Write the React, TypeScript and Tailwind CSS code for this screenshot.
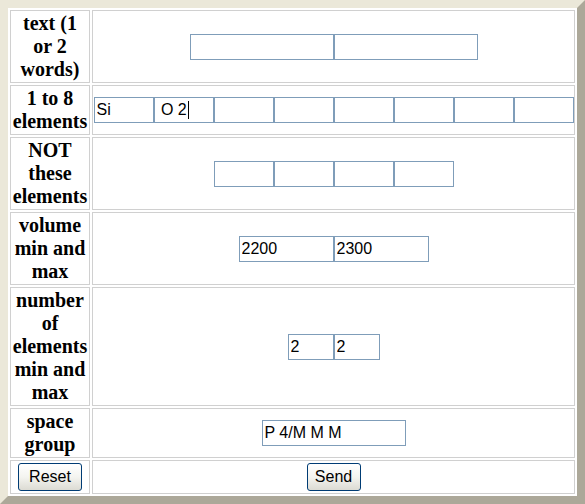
const labelCls =
  "border border-[#d0d0d0] p-[1px] text-center font-bold text-[20px] leading-[23px] text-black font-['Liberation_Serif','Times_New_Roman',serif]"
const fieldCls =
  "border border-[#d0d0d0] p-[1px] flex items-center justify-center"
const inputCls =
  "h-[26px] border border-[#7f9db9] bg-white px-[2px] text-[16px] text-black outline-none font-['Liberation_Sans',Arial,sans-serif]"
const btnCls =
  "h-[28px] rounded-[3px] border border-[#003c74] bg-gradient-to-b from-white via-[#f4f4f0] to-[#dcdbd3] text-[16px] text-black font-['Liberation_Sans',Arial,sans-serif]"

function Inputs({ count, width, values = [] }: { count: number; width: string; values?: string[] }) {
  return (
    <>
      {Array.from({ length: count }).map((_, i) => (
        <input key={i} className={`${inputCls} ${width}`} defaultValue={values[i] ?? ''} />
      ))}
    </>
  )
}

export default function App() {
  return (
    <div className="w-[585px] bg-white">
      <form
        className="grid grid-cols-[80px_483px] gap-[2px] p-[2px] bg-white border-8 border-t-[#ebe8d9] border-l-[#ebe8d9] border-r-[#aca899] border-b-[#aca899]"
        onSubmit={(e) => e.preventDefault()}
      >
        <div className={labelCls}>
          text (1<br />or 2<br />words)
        </div>
        <div className={fieldCls}>
          <Inputs count={2} width="w-[144px]" />
        </div>

        <div className={labelCls}>
          1 to 8<br />elements
        </div>
        <div className={fieldCls}>
          <div className="relative flex">
            <Inputs count={8} width="w-[60px]" values={['Si', ' O 2']} />
            <span className="absolute left-[94px] top-[4px] h-[18px] w-px bg-black" />
          </div>
        </div>

        <div className={labelCls}>
          NOT<br />these<br />elements
        </div>
        <div className={fieldCls}>
          <Inputs count={4} width="w-[60px]" />
        </div>

        <div className={labelCls}>
          volume<br />min and<br />max
        </div>
        <div className={fieldCls}>
          <Inputs count={2} width="w-[95px]" values={['2200', '2300']} />
        </div>

        <div className={labelCls}>
          number<br />of<br />elements<br />min and<br />max
        </div>
        <div className={fieldCls}>
          <Inputs count={2} width="w-[46px]" values={['2', '2']} />
        </div>

        <div className={labelCls}>
          space<br />group
        </div>
        <div className={fieldCls}>
          <Inputs count={1} width="w-[144px]" values={['P 4/M M M']} />
        </div>

        <div className={`${fieldCls} h-[34px]`}>
          <button type="reset" className={`${btnCls} w-[64px]`}>
            Reset
          </button>
        </div>
        <div className={`${fieldCls} h-[34px]`}>
          <button type="submit" className={`${btnCls} w-[54px]`}>
            Send
          </button>
        </div>
      </form>
    </div>
  )
}
